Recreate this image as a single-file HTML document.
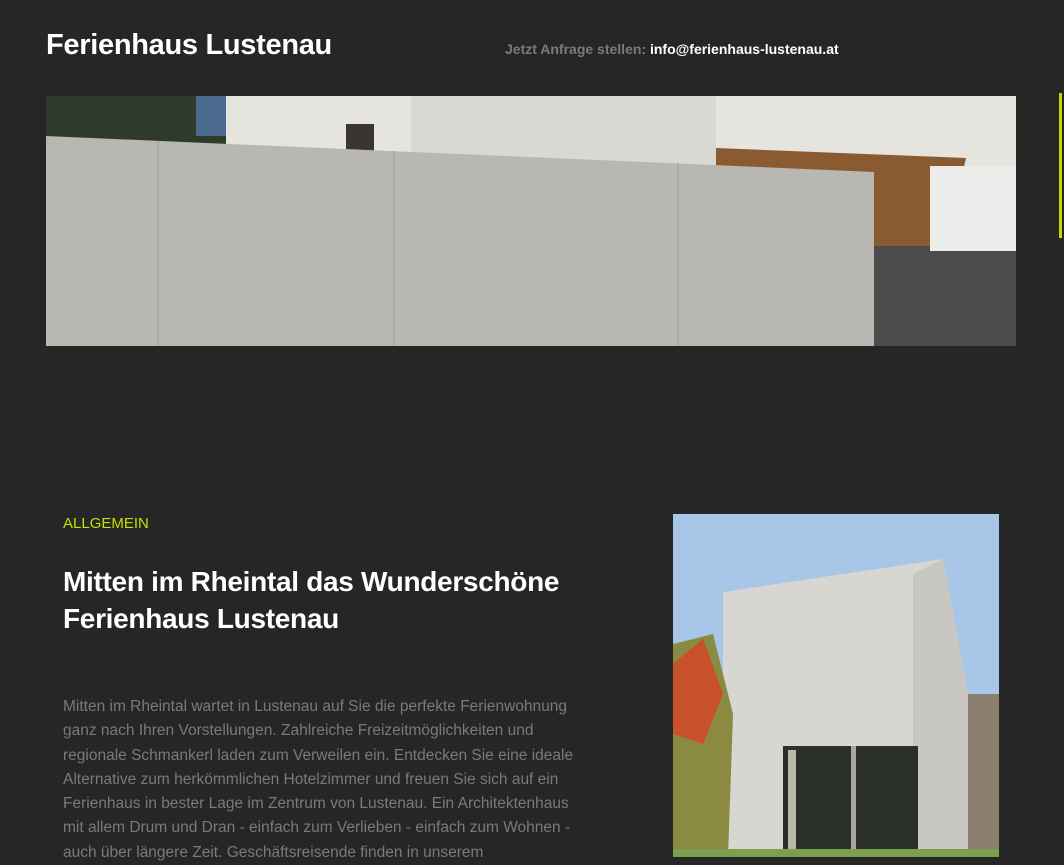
<!DOCTYPE html>
<html><head><meta charset="utf-8"><style>
*{margin:0;padding:0;box-sizing:border-box}
html,body{width:1064px;height:857px;overflow:hidden;background:#262626;font-family:"Liberation Sans",sans-serif}
.a{position:absolute}
</style></head><body>
<div class="a" style="left:46px;top:29px;font-size:29px;font-weight:bold;color:#fff;letter-spacing:-0.3px">Ferienhaus Lustenau</div>
<div class="a" style="left:505px;top:41px;font-size:14px;font-weight:bold;color:#7a7a7a">Jetzt Anfrage stellen: <span style="color:#fff">info@ferienhaus-lustenau.at</span></div>
<svg class="a" style="left:46px;top:96px" width="970" height="250" viewBox="0 0 970 250">
<rect width="970" height="250" fill="#e6e4df"/>
<rect x="0" y="0" width="180" height="50" fill="#2e3a2a"/>
<rect x="150" y="0" width="30" height="40" fill="#4a6a90"/>
<rect x="365" y="0" width="305" height="80" fill="#dad8d3"/>
<rect x="300" y="28" width="28" height="30" fill="#3a3530"/>
<polygon points="670,52 920,62 900,150 830,155 830,160 670,160" fill="#8a5a30"/>
<rect x="828" y="150" width="142" height="100" fill="#4b4b4b"/>
<rect x="884" y="70" width="86" height="85" fill="#ececea"/>
<polygon points="0,40 828,76 828,250 0,250" fill="#b8b7b2"/>
<line x1="112" y1="45" x2="112" y2="250" stroke="#9c9b97"/>
<line x1="348" y1="55" x2="348" y2="250" stroke="#9c9b97"/>
<line x1="632" y1="67" x2="632" y2="250" stroke="#9c9b97"/>
</svg>
<div class="a" style="left:1059px;top:93px;width:3px;height:145px;background:#c5d800"></div>
<div class="a" style="left:63px;top:515px;font-size:15px;color:#c5df00">ALLGEMEIN</div>
<div class="a" style="left:63px;top:563px;font-size:28px;font-weight:bold;color:#fff;line-height:37px;letter-spacing:-0.3px">Mitten im Rheintal das Wunderschöne<br>Ferienhaus Lustenau</div>
<div class="a" style="left:63px;top:695px;width:540px;font-size:15.5px;color:#7a7a7a;line-height:24.3px">Mitten im Rheintal wartet in Lustenau auf Sie die perfekte Ferienwohnung<br>ganz nach Ihren Vorstellungen. Zahlreiche Freizeitmöglichkeiten und<br>regionale Schmankerl laden zum Verweilen ein. Entdecken Sie eine ideale<br>Alternative zum herkömmlichen Hotelzimmer und freuen Sie sich auf ein<br>Ferienhaus in bester Lage im Zentrum von Lustenau. Ein Architektenhaus<br>mit allem Drum und Dran - einfach zum Verlieben - einfach zum Wohnen -<br>auch über längere Zeit. Geschäftsreisende finden in unserem</div>
<svg class="a" style="left:673px;top:514px" width="326" height="343" viewBox="0 0 326 343">
<rect width="326" height="343" fill="#a7c6e8"/>
<polygon points="50,78 270,45 295,180 295,343 50,343" fill="#d8d6d0"/>
<polygon points="270,45 295,180 295,343 240,343 240,60" fill="#c9c7c1"/>
<rect x="295" y="180" width="31" height="163" fill="#8b8070"/>
<polygon points="0,130 40,120 60,200 55,343 0,343" fill="#8a8a40"/>
<polygon points="0,150 30,125 50,180 30,230 0,220" fill="#c8502a"/>
<rect x="110" y="232" width="135" height="111" fill="#2a3028"/>
<rect x="115" y="236" width="8" height="107" fill="#b8b8a8"/>
<rect x="178" y="232" width="5" height="111" fill="#a8a8a0"/>
<rect x="0" y="335" width="326" height="8" fill="#7aa050"/>
</svg>
</body></html>
